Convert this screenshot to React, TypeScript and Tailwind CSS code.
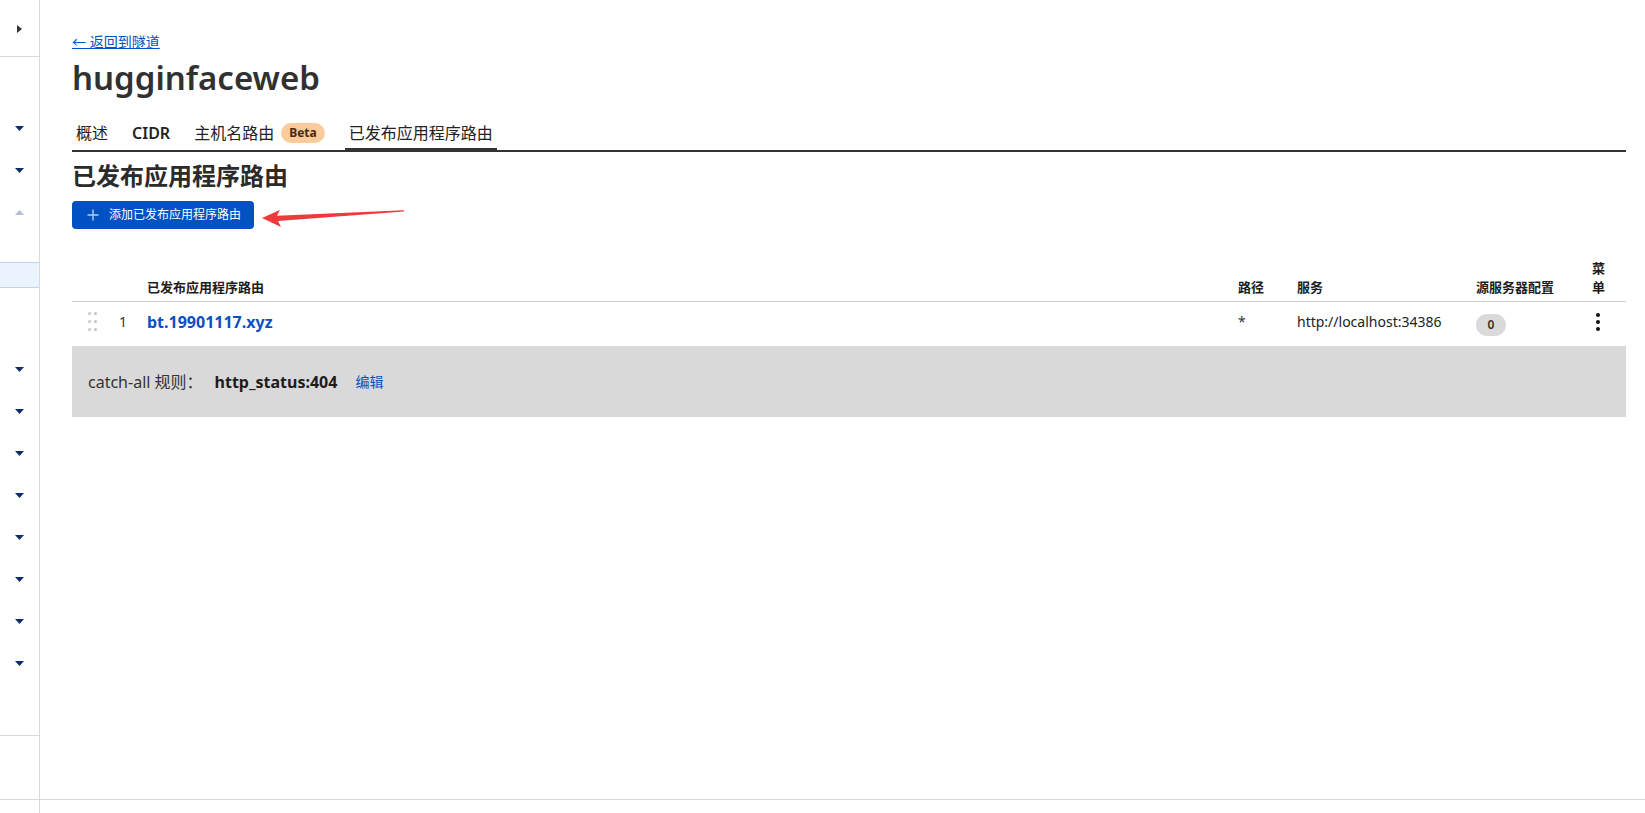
import React from "react";

const font = "font-['Noto_Sans','Noto_Sans_CJK_SC',sans-serif]";

function Caret(props: { up?: boolean; light?: boolean }) {
  // small sidebar toggles
  return (
    <svg width="9" height="5" viewBox="0 0 9 5" className={props.up ? "rotate-180" : ""}>
      <path d="M0 0 H9 L4.5 5 Z" fill={props.light ? "#aebfd6" : "#0f2d6b"} />
    </svg>
  );
}

function SideRow(props: { up?: boolean; light?: boolean }) {
  return (
    <div className="h-[42px] flex items-center justify-center">
      <Caret up={props.up} light={props.light} />
    </div>
  );
}

function Sidebar() {
  return (
    <div className="w-[40px] shrink-0 border-r border-[#d9d9d9] flex flex-col">
      <div className="h-[57px] border-b border-[#d9d9d9] flex items-center justify-center pt-[1px]">
        <svg width="5" height="8" viewBox="0 0 5 8">
          <path d="M0 0 L5 4 L0 8 Z" fill="#333" />
        </svg>
      </div>
      <div className="h-[50px]" />
      <SideRow />
      <SideRow />
      <SideRow up light />
      <div className="h-[29px]" />
      <div className="h-[26px] bg-[#eaf3fe] border-y border-[#bcd6f7]" />
      <div className="h-[60px]" />
      {[0, 1, 2, 3, 4, 5, 6, 7].map((i) => (
        <SideRow key={i} />
      ))}
      <div className="h-[52px] border-b border-[#d9d9d9]" />
      <div className="flex-1" />
    </div>
  );
}

function DragHandle() {
  return (
    <div className="grid grid-cols-2 gap-x-[3px] gap-y-[5px]">
      {[0, 1, 2, 3, 4, 5].map((i) => (
        <span key={i} className="w-[3px] h-[3px] rounded-full bg-[#c4c4c4]" />
      ))}
    </div>
  );
}

function Kebab() {
  return (
    <div className="flex flex-col gap-[3px]">
      <span className="w-[4px] h-[4px] rounded-full bg-[#111]" />
      <span className="w-[4px] h-[4px] rounded-full bg-[#111]" />
      <span className="w-[4px] h-[4px] rounded-full bg-[#111]" />
    </div>
  );
}

function RedArrow() {
  return (
    <svg
      width="144"
      height="24"
      viewBox="0 0 144 24"
      className="absolute left-[190px] top-[4px]"
    >
      <path
        d="M0 13 L18 5 L15 10.8 L142 5.3 L142 6.6 L16 16 L19 22 Z"
        fill="#ee3a3a"
      />
    </svg>
  );
}

export default function App() {
  const cols = "grid grid-cols-[75px_1fr_59px_179px_116px_34px]";

  return (
    <div className={`${font} h-[813px] w-full bg-white text-[#333] flex flex-col overflow-hidden`}>
      <div className="flex flex-1 min-h-0">
        <Sidebar />
        <div className="flex-1 pl-8 pr-[19px] pt-8">
          <a href="#" className="block text-[14px] leading-5 text-[#0051c3] underline w-fit">
            ← 返回到隧道
          </a>
          <h1 className="mt-[6px] text-[33px] leading-10 font-semibold text-[#313131]">
            hugginfaceweb
          </h1>

          {/* tabs */}
          <div className="mt-[23px] flex gap-4 border-b-2 border-[#333]">
            <div className="px-1 pb-[5px] text-[16px] leading-6 text-[#222]">概述</div>
            <div className="px-1 pb-[5px] text-[16px] leading-6 font-semibold text-[#222]">CIDR</div>
            <div className="px-1 pb-[5px] text-[16px] leading-6 text-[#222] flex items-center gap-[7px]">
              主机名路由
              <span className="h-[20px] px-[8px] rounded-full bg-[#fbcb9c] text-[12px] font-bold text-[#4b2a0c] flex items-center">
                Beta
              </span>
            </div>
            <div className="px-1 pb-[3px] text-[16px] leading-6 text-[#222] border-b-2 border-[#333]">
              已发布应用程序路由
            </div>
          </div>

          <h2 className="mt-2 text-[24px] leading-8 font-bold text-[#2b2b2b]">已发布应用程序路由</h2>

          <div className="relative mt-[9px]">
            <button className="h-[28px] w-[182px] rounded bg-[#0051c3] text-white text-[12px] flex items-center pl-[15px] gap-[10px]">
              <svg width="12" height="12" viewBox="0 0 12 12">
                <path d="M6 0.5 V11.5 M0.5 6 H11.5" stroke="#b8cdf0" strokeWidth="1.4" />
              </svg>
              添加已发布应用程序路由
            </button>
            <RedArrow />
          </div>

          {/* table */}
          <div className="mt-[30px]">
            <div className={`${cols} items-end border-b border-[#cfcfcf] text-[13px] leading-[19px] font-semibold text-[#1d1d1d]`}>
              <div />
              <div className="pb-1">已发布应用程序路由</div>
              <div className="pb-1">路径</div>
              <div className="pb-1">服务</div>
              <div className="pb-1">源服务器配置</div>
              <div className="pb-1">
                <span className="block w-[14px]">菜单</span>
              </div>
            </div>

            <div className={`${cols} items-center h-[44px] pb-[5px]`}>
              <div className="flex items-center pl-4">
                <DragHandle />
                <span className="ml-[22px] text-[14px] text-[#333]">1</span>
              </div>
              <a href="#" className="text-[16px] font-bold text-[#0a50c4] w-fit">
                bt.19901117.xyz
              </a>
              <div className="text-[14px] text-[#333]">*</div>
              <div className="text-[14px] text-[#222]">http://localhost:34386</div>
              <div>
                <span className="w-[30px] h-[22px] rounded-full bg-[#dadada] text-[12px] font-semibold text-[#333] flex items-center justify-center mt-[6px]">
                  0
                </span>
              </div>
              <div className="pl-1">
                <Kebab />
              </div>
            </div>

            <div className="h-[71px] bg-[#d9d9d9] flex items-center pl-4 text-[16px]">
              <span className="text-[#333]">catch-all 规则：</span>
              <span className="ml-3 font-bold text-[#1d1d1d]">http_status:404</span>
              <a href="#" className="ml-[18px] text-[14px] text-[#0a50c4]">
                编辑
              </a>
            </div>
          </div>
        </div>
      </div>
      <div className="h-[14px] border-t border-[#d9d9d9] flex">
        <div className="w-[40px] border-r border-[#d9d9d9]" />
      </div>
    </div>
  );
}
